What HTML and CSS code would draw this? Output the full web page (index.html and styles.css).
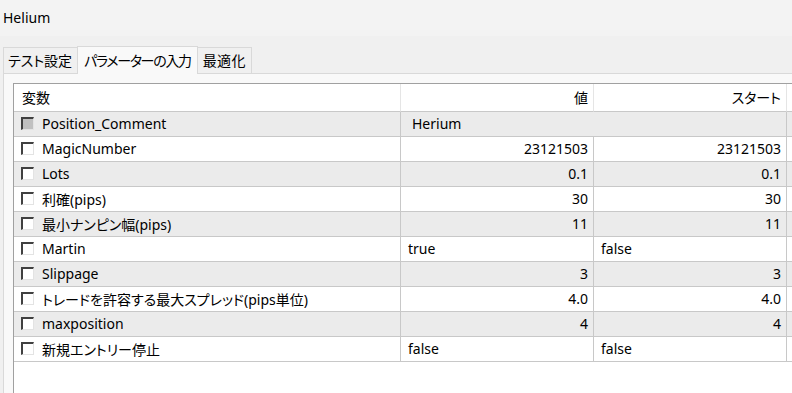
FILE: index.html
```html
<!DOCTYPE html>
<html lang="ja">
<head>
    <meta charset="UTF-8">
    <meta name="viewport" content="width=device-width, initial-scale=1.0">
    <title>Helium</title>
    <link rel="stylesheet" href="styles.css">
</head>
<body>

<div class="titlebar">Helium</div>

<div class="tabs">
    <div class="tab">テスト設定</div>
    <div class="tab active">パラメーターの入力</div>
    <div class="tab wide">最適化</div>
</div>

<div class="panel">
    <div class="grid">
        <div class="cell head">変数</div>
        <div class="cell head num">値</div>
        <div class="cell head num">スタート</div>
        <div class="cell head"></div>

        <div class="cell shade"><span class="check gray"></span>Position_Comment</div>
        <div class="cell shade edit">Herium</div>
        <div class="cell shade"></div>

        <div class="cell"><span class="check"></span>MagicNumber</div>
        <div class="cell num">23121503</div>
        <div class="cell num">23121503</div>
        <div class="cell"></div>

        <div class="cell shade"><span class="check"></span>Lots</div>
        <div class="cell shade num">0.1</div>
        <div class="cell shade num">0.1</div>
        <div class="cell shade"></div>

        <div class="cell"><span class="check"></span>利確(pips)</div>
        <div class="cell num">30</div>
        <div class="cell num">30</div>
        <div class="cell"></div>

        <div class="cell shade"><span class="check"></span>最小ナンピン幅(pips)</div>
        <div class="cell shade num">11</div>
        <div class="cell shade num">11</div>
        <div class="cell shade"></div>

        <div class="cell"><span class="check"></span>Martin</div>
        <div class="cell">true</div>
        <div class="cell">false</div>
        <div class="cell"></div>

        <div class="cell shade"><span class="check"></span>Slippage</div>
        <div class="cell shade num">3</div>
        <div class="cell shade num">3</div>
        <div class="cell shade"></div>

        <div class="cell"><span class="check"></span>トレードを許容する最大スプレッド(pips単位)</div>
        <div class="cell num">4.0</div>
        <div class="cell num">4.0</div>
        <div class="cell"></div>

        <div class="cell shade"><span class="check"></span>maxposition</div>
        <div class="cell shade num">4</div>
        <div class="cell shade num">4</div>
        <div class="cell shade"></div>

        <div class="cell"><span class="check"></span>新規エントリー停止</div>
        <div class="cell">false</div>
        <div class="cell">false</div>
        <div class="cell"></div>
    </div>
</div>

</body>
</html>
```

FILE: styles.css
```css
body {
    margin: 0;
    font-family: "Noto Sans", "Noto Sans CJK JP", sans-serif;
    font-size: 14px;
    font-feature-settings: "palt"; /* kana proportionnels, comme Yu Gothic UI */
    color: #000000;
    background-color: #F0F0F0;
    width: 792px;
    height: 393px;
    overflow: hidden;
}
.titlebar {
    height: 36px;
    line-height: 35px;
    padding-left: 3px;
    background-color: #F3F3F3;
}
.tabs {
    display: flex;
    align-items: flex-end;
    height: 37px;
    padding-left: 3px;
}
.tab {
    height: 25px;
    line-height: 25px;
    padding: 0 5px 0 4px;
    border: 1px solid #D9D9D9;
    border-bottom: none;
    background-color: #F0F0F0;
}
.tab.active {
    height: 27px;
    line-height: 27px;
    padding: 0 6px;
    margin: 0 -1px -1px;
    letter-spacing: -1.3px;
    background-color: #F9F9F9;
    position: relative; /* passe par-dessus la bordure du panneau */
}
.tab.wide {
    padding: 0 5px 0 5px;
    letter-spacing: 0.3px;
}
.panel {
    margin-left: 3px;
    height: 320px;
    padding: 9px 0 0 9px;
    border: 1px solid #D9D9D9;
    border-right: none;
    background-color: #F9F9F9;
}
.grid {
    display: grid;
    grid-template-columns: 387px 193px 193px 100px;
    grid-auto-rows: 25px;
    grid-template-rows: 28px;
    height: 320px;
    border-top: 1px solid #A0A0A0;
    border-left: 1px solid #A0A0A0;
    background-color: #FFFFFF;
    align-content: start;
}
.cell {
    display: flex;
    align-items: center;
    box-sizing: border-box;
    padding: 0 5px 1px 7px;
    border-right: 1px solid #C8C8C8;
    border-bottom: 1px solid #C8C8C8;
    white-space: nowrap;
}
.head {
    border-right-color: #E5E5E5;
    padding-left: 8px;
}
.num {
    justify-content: flex-end;
}
.shade {
    background-color: #EBEBEB;
}
.edit {
    grid-column: span 2; /* la chaîne déborde sur la colonne Start */
    padding-left: 11px;
}
.check {
    width: 13px;
    height: 13px;
    box-sizing: border-box;
    margin-right: 8px;
    border-top: 2px solid #404040;
    border-left: 2px solid #404040;
    border-right: 1px solid #E3E3E3;
    border-bottom: 1px solid #E3E3E3;
    background-color: #FFFFFF;
}
.check.gray {
    background-color: #C0C0C0;
}
```
